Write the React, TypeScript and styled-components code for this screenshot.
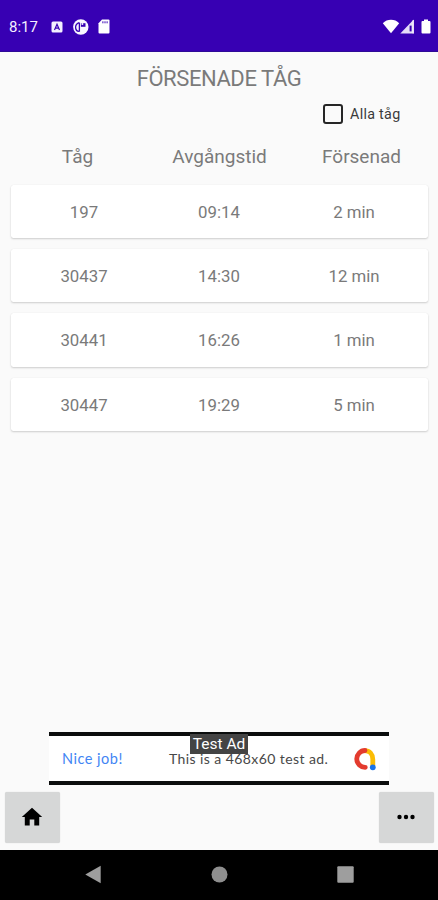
import React from "react";
import styled, { createGlobalStyle } from "styled-components";

const GlobalStyle = createGlobalStyle`
  * { box-sizing: border-box; }
  body { margin: 0; background: #fafafa; font-family: Roboto, sans-serif; }
`;

const Screen = styled.div`
  width: 438px;
  height: 900px;
  display: flex;
  flex-direction: column;
  overflow: hidden;
  background: #fafafa;
  color: #7a7a7a;
`;

const StatusBar = styled.header`
  height: 52px;
  flex: none;
  display: flex;
  align-items: center;
  justify-content: space-between;
  padding: 2px 7px 0 9px;
  background: #3700b3;
  color: #f4f0ff;
  border-bottom: 1px solid #2e0a96;
`;

const StatusGroup = styled.div<{ $gap: number }>`
  display: flex;
  align-items: center;
  gap: ${(p) => p.$gap}px;
`;

const Clock = styled.span`
  width: 29px;
  margin-right: 4px;
  font-size: 15px;
  white-space: nowrap;
`;

const BatterySlot = styled.span`
  display: flex;
  margin-left: 7px;
`;

const Main = styled.main`
  flex: 1;
  display: flex;
  flex-direction: column;
`;

const Title = styled.h1`
  margin: 14px 0 0;
  height: 26px;
  line-height: 26px;
  text-align: center;
  font-size: 22px;
  font-weight: 400;
  letter-spacing: -0.42px;
`;

const Filter = styled.label`
  display: flex;
  align-items: center;
  align-self: flex-end;
  gap: 7px;
  height: 20px;
  margin: 12px 37.5px 0 0;
  font-size: 14.3px;
  letter-spacing: 0.3px;
  color: #3a3a3a;
`;

const Checkbox = styled.span`
  width: 20px;
  height: 20px;
  border: 2px solid #262626;
  border-radius: 3px;
`;

const Columns = styled.div`
  display: grid;
  grid-template-columns: repeat(3, 142px);
  justify-content: center;
  height: 26px;
  line-height: 26px;
  margin: 19.5px 0 15px;
  padding-left: 1px;
  text-align: center;
  font-size: 19px;
`;

const TrainList = styled.div`
  display: flex;
  flex-direction: column;
  gap: 11px;
  padding: 0 10.5px;
`;

const TrainCard = styled.div`
  display: grid;
  grid-template-columns: repeat(3, 135px);
  justify-content: center;
  align-items: center;
  height: 53.4px;
  padding-top: 1px;
  border-radius: 2.5px;
  background: #fff;
  box-shadow: 0 1px 2px rgba(0, 0, 0, 0.18), 0 0 1px rgba(0, 0, 0, 0.08);
  text-align: center;
  font-size: 16.8px;
`;

const Footer = styled.footer`
  margin-top: auto;
  display: flex;
  flex-direction: column;
`;

const AdBanner = styled.section`
  position: relative;
  align-self: center;
  width: 340px;
  height: 53px;
  display: flex;
  align-items: center;
  padding: 0 13px;
  background: #fff;
  border-top: 4.5px solid #0b0d0d;
  border-bottom: 4.5px solid #0b0d0d;
  font-family: Lato, sans-serif;
  font-size: 14px;
  letter-spacing: 0.42px;
  color: #484848;
`;

const AdHeadline = styled.span`
  width: 107px;
  font-size: 14.5px;
  letter-spacing: 0.5px;
  color: #4285f4;
`;

const AdText = styled.span`
  flex: 1;
  white-space: nowrap;
`;

const AdTag = styled.span`
  position: absolute;
  left: 141px;
  top: -2px;
  width: 58px;
  height: 20px;
  line-height: 20px;
  background: #444;
  color: #fff;
  text-align: center;
  white-space: nowrap;
  font-family: Roboto, sans-serif;
  font-size: 15.5px;
  letter-spacing: 0;
`;

const Actions = styled.div`
  display: flex;
  justify-content: space-between;
  padding: 7px 4px 7px 5px;
`;

const ActionButton = styled.button`
  width: 55px;
  height: 50.5px;
  display: flex;
  align-items: center;
  justify-content: center;
  padding: 0 1px 0 0;
  border: 0;
  border-radius: 2px;
  background: #d6d7d7;
  box-shadow: 0 0 1px rgba(0, 0, 0, 0.2);
`;

const NavBar = styled.nav`
  height: 50.5px;
  flex: none;
  display: grid;
  grid-template-columns: repeat(3, 126.5px);
  justify-content: center;
  align-items: center;
  justify-items: center;
  background: #000;
`;

const trains = [
  ["197", "09:14", "2 min"],
  ["30437", "14:30", "12 min"],
  ["30441", "16:26", "1 min"],
  ["30447", "19:29", "5 min"],
];

const KeyboardIcon = () => (
  <svg width="12" height="12" viewBox="0 0 12 12">
    <rect x="0.5" y="0.5" width="11" height="11" rx="1.5" fill="#f4f0ff" />
    <path d="M3.5 9 6 3.2 8.5 9M4.4 7.2h3.2" fill="none" stroke="#3700b3" strokeWidth="1.2" />
  </svg>
);

const BadgeIcon = () => (
  <svg width="17" height="16" viewBox="0 0 17 16">
    <circle cx="8.8" cy="8" r="7.7" fill="#f8f6ff" />
    <path d="M7.4 3.4v9.4M7 3.6Q3.4 5 3.6 8.6T7 12.4" fill="none" stroke="#3700b3" strokeWidth="1.3" />
    <path d="M8.9 4.2h4.6v3.6H8.9z" fill="#3700b3" />
    <circle cx="10.4" cy="4.9" r="1" fill="#f8f6ff" />
  </svg>
);

const SdCardIcon = () => (
  <svg width="12" height="15" viewBox="0 0 12 15">
    <path d="M4 .5h6.5q1 0 1 1v12q0 1-1 1h-9q-1 0-1-1V4.2z" fill="#fff" />
    <path d="M4.9 2.3v2M7 2.3v2M9.1 2.3v2" stroke="#3700b3" strokeWidth="1" />
  </svg>
);

const WifiIcon = () => (
  <svg width="18" height="15" viewBox="0 0 18 15">
    <path d="M.8 4.2Q4.2.8 9 .8t8.2 3.4L9 14.3z" fill="#fff" />
  </svg>
);

const SignalIcon = () => (
  <svg width="14" height="15" viewBox="0 0 14 15">
    <path d="M.3 14.5 13.7.6v13.9z" fill="#e4dcf8" />
    <path d="M9.6 6.6h2v5.8h-2z" fill="#3700b3" />
    <path d="M13.2 1v13.5" stroke="#fff" />
  </svg>
);

const BatteryIcon = () => (
  <svg width="10" height="15" viewBox="0 0 10 15">
    <path d="M3 .5h4v1.4h1.5q1 0 1 1v10.6q0 1-1 1h-7q-1 0-1-1V2.9q0-1 1-1H3z" fill="#fff" />
  </svg>
);

const AdMobIcon = () => (
  <svg width="23" height="24" viewBox="0 0 23 24" fill="none" strokeWidth="4.8">
    <path d="M11.5 3.6C16.8 3.6 19.8 7.4 19.8 12.3V19" stroke="#fbbc04" />
    <path d="M12 3.5a8.4 8.4 0 0 0 .3 16.8" stroke="#e33b2e" strokeLinecap="round" />
    <circle cx="19.8" cy="20.3" r="2.9" fill="#1a73e8" />
  </svg>
);

const HomeIcon = () => (
  <svg width="22" height="20" viewBox="0 0 22 20">
    <path d="M11 .8 21.2 10h-3v8.6h-4.9v-6H8.7v6H3.8V10h-3z" fill="#000" />
  </svg>
);

const MoreIcon = () => (
  <svg width="18" height="6" viewBox="0 0 18 6">
    <circle cx="2.5" cy="3" r="2.2" />
    <circle cx="9" cy="3" r="2.2" />
    <circle cx="15.5" cy="3" r="2.2" />
  </svg>
);

export default function App() {
  return (
    <>
      <GlobalStyle />
      <Screen>
        <StatusBar>
          <StatusGroup $gap={9}>
            <Clock>8:17</Clock>
            <KeyboardIcon />
            <BadgeIcon />
            <SdCardIcon />
          </StatusGroup>
          <StatusGroup $gap={0}>
            <WifiIcon />
            <SignalIcon />
            <BatterySlot>
              <BatteryIcon />
            </BatterySlot>
          </StatusGroup>
        </StatusBar>
        <Main>
          <Title>FÖRSENADE TÅG</Title>
          <Filter>
            <Checkbox />
            Alla tåg
          </Filter>
          <Columns>
            <span>Tåg</span>
            <span>Avgångstid</span>
            <span>Försenad</span>
          </Columns>
          <TrainList>
            {trains.map(([id, time, delay]) => (
              <TrainCard key={id}>
                <span>{id}</span>
                <span>{time}</span>
                <span>{delay}</span>
              </TrainCard>
            ))}
          </TrainList>
          <Footer>
            <AdBanner>
              <AdHeadline>Nice job!</AdHeadline>
              <AdText>This is a 468x60 test ad.</AdText>
              <AdMobIcon />
              <AdTag>Test Ad</AdTag>
            </AdBanner>
            <Actions>
              <ActionButton aria-label="Hem">
                <HomeIcon />
              </ActionButton>
              <ActionButton aria-label="Mer">
                <MoreIcon />
              </ActionButton>
            </Actions>
          </Footer>
        </Main>
        <NavBar>
          <svg width="16" height="19" viewBox="0 0 16 19">
            <path d="M.3 9.5 15.7.8v17.4z" fill="#9e9e9e" />
          </svg>
          <svg width="17" height="17" viewBox="0 0 17 17">
            <circle cx="8.5" cy="8.5" r="8" fill="#8e8e8e" />
          </svg>
          <svg width="17" height="17" viewBox="0 0 17 17">
            <rect x=".3" y=".3" width="16.4" height="16.4" rx="1" fill="#9e9e9e" />
          </svg>
        </NavBar>
      </Screen>
    </>
  );
}
